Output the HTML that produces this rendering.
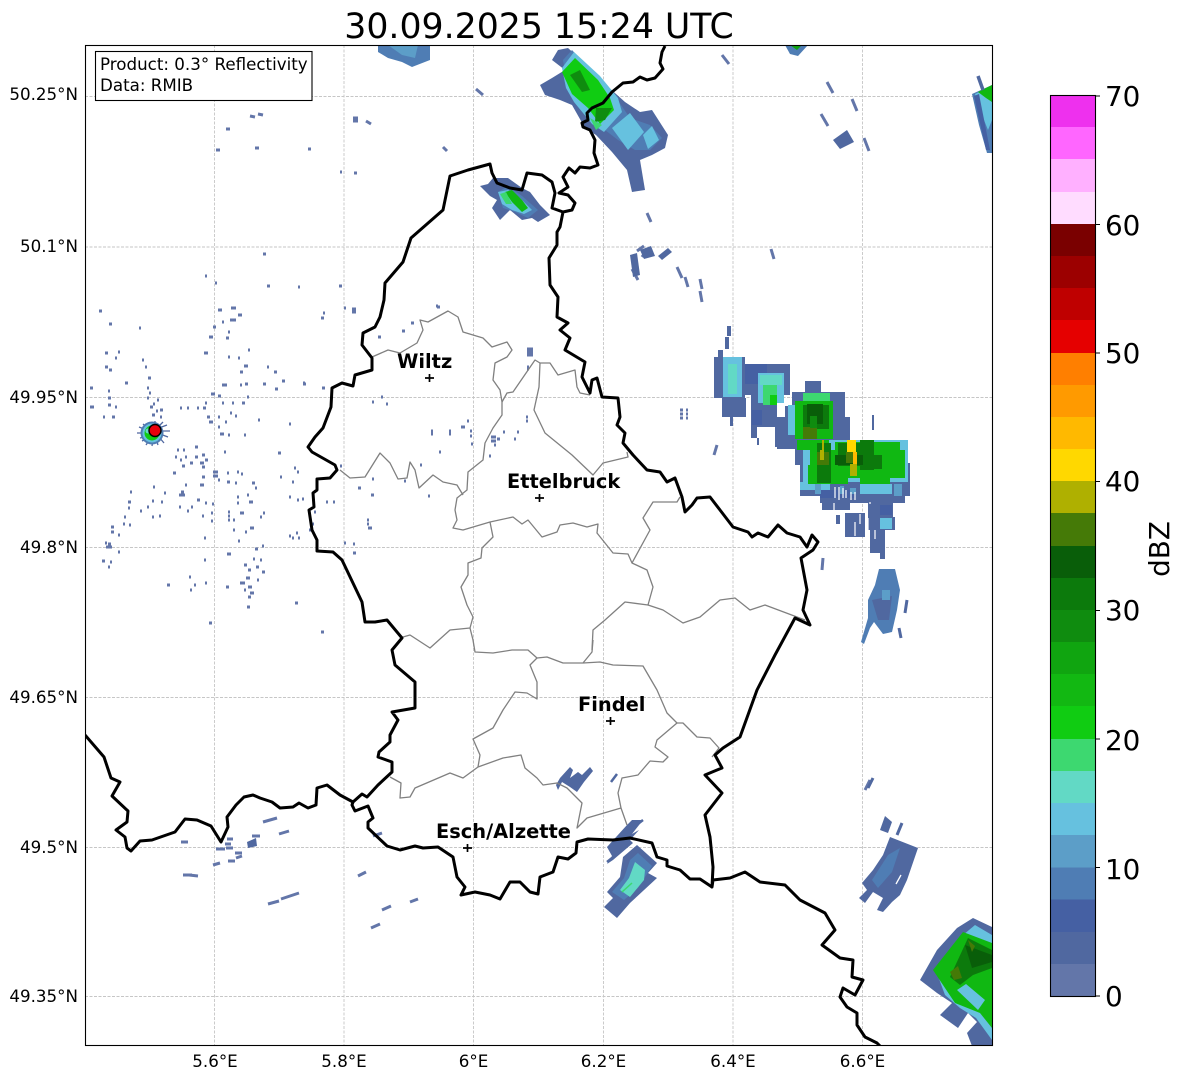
<!DOCTYPE html>
<html><head><meta charset="utf-8"><style>
html,body{margin:0;padding:0;background:#fff;width:1184px;height:1081px;overflow:hidden}
svg{display:block}
text{font-family:"DejaVu Sans","Liberation Sans",sans-serif;fill:#000}
</style></head><body>
<svg width="1184" height="1081" viewBox="0 0 1184 1081" xmlns="http://www.w3.org/2000/svg">
<defs><clipPath id="c"><rect x="85" y="45" width="908" height="1001"/></clipPath></defs>
<rect width="1184" height="1081" fill="#fff"/>
<text x="539" y="38" font-size="34.7" text-anchor="middle">30.09.2025 15:24 UTC</text>
<g stroke="#c6c6c6" stroke-width="0.9" stroke-dasharray="3 1.5" fill="none">
<path d="M214.5 45V1046M344 45V1046M473.5 45V1046M603.5 45V1046M733 45V1046M862.5 45V1046"/>
<path d="M85 96.5H993M85 247H993M85 397.5H993M85 547.5H993M85 697.5H993M85 847.5H993M85 996.5H993"/>
</g>
<g clip-path="url(#c)">
<!-- speckle -->
<path fill="none" stroke="#6376A9" stroke-width="3" d="M99 311h3M109 324h3M139 328h2M105 353h3M118 352h2M115 358h2M105 367h3M109 370h3M125 383h3M90 388h3M108 391h2M108 398h3M90 407h4M108 405h3M115 407h2M103 417h2M112 417h3M142 360h2M145 367h2M148 378h3M147 388h2M147 398h2M157 400h2M150 407h3M160 410h3M160 417h2M149 393h2M153 404h2M156 411h2M152 415h3M218 310h4M231 308h5M238 315h4M230 320h6M222 322h2M213 327h3M228 332h2M209 337h4M226 338h3M204 353h4M228 357h2M238 358h2M248 350h2M244 366h4M240 372h3M267 367h2M274 372h3M282 381h3M303 384h3M322 388h3M263 384h3M275 389h3M245 384h3M240 385h2M222 385h5M218 396h3M211 394h4M247 397h2M242 403h3M232 403h2M222 403h2M205 403h2M203 408h3M197 408h2M187 408h2M180 408h2M207 417h3M209 422h4M218 417h2M230 413h2M235 416h2M225 422h2M258 420h2M289 424h2M218 427h2M220 434h4M228 435h2M244 435h2M278 453h3M224 452h2M177 450h2M183 450h2M195 447h3M202 455h3M175 457h2M185 457h2M195 457h3M205 460h3M180 460h2M190 463h3M200 463h4M182 466h3M202 467h3M173 473h3M202 477h3M200 485h4M185 485h2M179 495h6M181 492h3M213 472h5M213 476h5M227 473h2M227 482h3M237 472h2M241 474h2M218 480h2M235 483h2M252 483h3M255 488h2M247 495h2M237 497h2M237 503h2M249 502h4M197 500h3M212 504h2M205 503h2M179 507h2M187 511h2M191 507h2M161 502h2M152 501h2M128 502h3M130 492h2M153 487h2M164 493h2M128 508h2M140 511h2M147 507h2M152 517h2M159 516h2M124 517h2M123 524h2M129 525h2M111 527h3M111 532h3M118 535h2M105 543h2M106 547h6M108 544h3M118 552h2M102 561h3M110 562h2M108 567h2M202 516h2M211 513h2M211 521h2M228 512h2M228 516h2M228 520h2M240 513h4M263 513h2M260 517h2M233 520h2M233 530h2M245 532h2M250 528h4M238 541h2M204 538h2M255 549h3M262 546h2M227 554h4M204 560h2M244 565h3M248 570h3M253 559h2M260 560h2M256 567h3M262 572h3M246 578h4M257 580h2M240 583h5M248 587h4M244 590h2M250 593h4M248 597h3M247 607h3M226 587h3M205 583h2M189 577h2M194 585h2M190 590h2M167 585h3M209 623h3M295 603h3M321 632h3M289 497h2M297 500h2M302 499h2M326 502h2M333 502h2M292 482h2M280 477h2M294 468h2M297 472h2M340 466h2M372 479h2M358 488h3M371 495h3M367 520h2M367 524h2M368 528h4M314 512h2M312 524h2M309 530h3M289 536h2M296 533h2M292 538h2M298 538h2M344 543h2M353 544h2M353 553h3M372 402h2M381 397h2M378 337h3M321 318h3M323 313h2M344 308h2M352 309h4M352 312h4M436 306h2M411 323h3M402 331h3M527 352h6M527 349h6M527 355h6M527 367h2M527 369h2M386 404h2M303 383h2M431 431h2M431 434h2M449 431h2M449 434h2M461 427h4M467 421h2M470 431h2M470 436h2M471 444h2M491 437h5M491 441h5M497 439h3M494 445h2M503 432h2M517 432h2M514 439h2M526 417h2M526 421h2M489 456h2M439 452h2M420 465h2M404 481h2M428 496h2M680 410h3M680 414h3M680 418h3M686 410h2M686 414h2M686 418h2M226 129h4M216 150h4M263 254h3M205 276h2M215 283h2M267 286h3M298 287h2M339 286h3M255 148h4M308 149h3M340 172h2M354 173h3M353 118h5M353 121h5M437 307h3"/>
<!-- dashes -->
<path fill="none" stroke="#6376A9" stroke-width="3" d="M250 116l5 1M258 114l5 1M366 121l5 3M476 89l7 6M443 147l4 4M722 55l7 9M827 82l6 11M852 99l5 12M821 114l7 12M864 138l5 13M771 249l3 10M642 257l5-7M637 251l7-5M632 255l2 9M632 269l6 11M647 213l4 9M677 267l5 11M685 277l3 10M700 279l2 10M700 291l2 11M227 839h6M225 844h6M216 849h9M226 848h7M235 853h7M236 858l6-2M228 861h7M213 865l7-2M252 836h8M263 822l14-4M279 834l10-3M373 836l9-3M183 875h9M189 875l9 1M268 904l11-3M281 899l18-6M358 876l8-4M382 910l9-4M371 928l9-4M410 902l8-3M181 842h7M717 445l-3 10M823 558l-1 12M865 790l5-10"/>
<!-- misc blobs -->
<g fill="#5068A0">
<polygon points="247,842 256,838 257,846 248,848"/>
<polygon points="833,140 847,130 854,142 840,149"/>
<polygon points="640,250 651,246 655,256 644,259"/>
<polygon points="658,256 668,248 672,252 662,260"/>
<polygon points="630,255 637,253 640,275 633,277"/>
<polygon points="880,830 885,816 892,822 888,833"/>
</g>
<!-- top cell left -->
<polygon fill="#4F7DB4" points="378,45 430,45 430,60 412,67 402,62 388,58 378,52"/>
<polygon fill="#5C9EC8" points="388,45 418,45 415,58 402,55"/>
<polygon fill="#4F7DB4" points="785,45 808,45 798,56 790,54"/>
<polygon fill="#10A510" points="790,45 802,45 797,50"/>
<!-- top centre cell -->
<polygon fill="#5068A0" points="552,60 558,50 568,48 590,68 606,85 625,102 640,112 652,110 668,135 665,148 652,155 640,160 645,190 632,192 627,170 612,152 596,135 585,128 572,105 560,100 545,95 540,85 552,78 565,70"/>
<polygon fill="#4F7DB4" points="563,60 572,50 592,72 612,92 630,118 650,125 662,138 650,150 635,150 618,140 605,130 592,122 578,105 568,90"/>
<polygon fill="#66C1DF" points="562,68 574,52 600,76 618,98 622,112 604,132 592,124 574,102 566,88"/>
<polygon fill="#66C1DF" points="612,128 630,113 644,132 628,150"/>
<polygon fill="#66C1DF" points="643,135 652,126 659,140 648,149"/>
<polygon fill="#10CC12" points="562,72 575,58 598,80 610,98 614,110 600,124 588,108 572,94"/>
<polygon fill="#0F8C0F" points="570,75 580,70 590,90 582,92"/>
<polygon fill="#0F8C0F" points="596,108 612,108 605,120 595,122"/>
<polygon fill="#3DD870" points="590,118 602,125 596,130"/>
<!-- small cell north -->
<polygon fill="#5068A0" points="480,186 488,184 493,178 508,178 522,188 530,192 540,205 550,215 538,222 532,218 522,220 510,210 500,220 492,208 497,200 490,196"/>
<polygon fill="#4F7DB4" points="498,192 508,186 522,196 538,210 528,218 515,212 503,208"/>
<polygon fill="#66C1DF" points="498,192 508,190 520,198 532,210 524,214 512,210 502,204"/>
<polygon fill="#10B812" points="505,192 512,190 522,200 528,208 522,212 512,202"/>
<polygon fill="#3DD870" points="500,194 506,192 512,204 506,204"/>
<!-- top-right cell -->
<polygon fill="#4F7DB4" points="972,94 992,85 992,153 987,153 979,125"/>
<polygon fill="#66C1DF" points="975,94 992,86 992,120 988,130 982,115"/>
<polygon fill="#4560A3" points="974,96 979,94 990,150 986,150"/>
<polygon fill="#10B812" points="978,92 992,85 992,102 986,98"/>
<path stroke="#5068A0" stroke-width="3.5" d="M978 76l5 14" fill="none"/>
<!-- east complex -->
<g fill="#5068A0">
<rect x="718" y="350" width="5" height="10"/><rect x="727" y="326" width="4" height="10"/>
<rect x="725" y="337" width="4" height="12"/>
<rect x="714" y="357" width="31" height="41"/><rect x="722" y="398" width="24" height="19"/>
<rect x="730" y="417" width="3" height="9"/>
<rect x="745" y="364" width="45" height="31"/><rect x="751" y="395" width="26" height="32"/>
<rect x="751" y="427" width="6" height="11"/><rect x="757" y="438" width="2" height="7"/>
<rect x="805" y="381" width="16" height="11"/><rect x="792" y="392" width="53" height="25"/>
<rect x="785" y="406" width="60" height="24"/><rect x="775" y="417" width="75" height="30"/>
<rect x="777" y="437" width="22" height="12"/>
<rect x="795" y="440" width="8" height="25"/><rect x="800" y="463" width="110" height="30"/>
<rect x="800" y="484" width="110" height="12"/><rect x="820" y="490" width="85" height="13"/>
<rect x="822" y="498" width="28" height="12"/><rect x="836" y="515" width="4" height="9"/>
<rect x="845" y="513" width="20" height="24"/><rect x="876" y="503" width="17" height="18"/>
<rect x="868" y="517" width="27" height="13"/><rect x="870" y="530" width="15" height="23"/>
<rect x="880" y="552" width="5" height="7"/><rect x="872" y="415" width="2" height="15"/>
<rect x="868" y="502" width="8" height="26"/>
</g>
<g fill="#4560A3"><rect x="745" y="364" width="22" height="20"/><rect x="752" y="410" width="10" height="15"/><rect x="820" y="490" width="35" height="8"/><rect x="880" y="505" width="12" height="10"/></g>
<g fill="#66C1DF">
<rect x="723" y="357" width="19" height="40"/>
<rect x="758" y="373" width="26" height="30"/>
<rect x="788" y="405" width="40" height="30"/>
<rect x="803" y="440" width="105" height="42"/>
<rect x="800" y="482" width="30" height="8"/><rect x="860" y="484" width="32" height="10"/>
<rect x="880" y="518" width="12" height="11"/>
</g>
<g fill="#5C9EC8"><rect x="840" y="486" width="4" height="8"/><rect x="850" y="488" width="6" height="6"/><rect x="894" y="484" width="8" height="12"/><rect x="815" y="484" width="6" height="10"/></g>
<g fill="#62D9C5"><rect x="728" y="364" width="9" height="30"/><rect x="760" y="375" width="22" height="10"/></g>
<rect x="763" y="385" width="14" height="20" fill="#3DD870"/>
<rect x="770" y="395" width="7" height="10" fill="#10CC12"/>
<rect x="803" y="393" width="27" height="8" fill="#3DD870"/>
<g fill="#10B812">
<rect x="795" y="401" width="38" height="38"/>
<rect x="797" y="440" width="32" height="10"/>
<rect x="810" y="450" width="95" height="28"/>
<rect x="808" y="465" width="40" height="19"/><rect x="860" y="478" width="30" height="6"/>
<rect x="835" y="442" width="65" height="10"/>
</g>
<g fill="#0C7A0C">
<rect x="803" y="405" width="26" height="24"/>
<rect x="817" y="443" width="14" height="40"/>
<rect x="838" y="443" width="22" height="23"/>
<rect x="860" y="440" width="14" height="30"/>
<rect x="872" y="455" width="10" height="14"/>
</g>
<g fill="#095E09"><rect x="807" y="404" width="16" height="20"/><rect x="835" y="455" width="28" height="10"/></g>
<rect x="803" y="427" width="14" height="12" fill="#457A07"/>
<rect x="810" y="416" width="7" height="12" fill="#0F8C0F"/>
<rect x="817" y="452" width="12" height="13" fill="#457A07"/>
<rect x="820" y="450" width="4" height="10" fill="#AFB000"/>
<rect x="822" y="440" width="2" height="12" fill="#AFB000"/>
<rect x="847" y="440" width="9" height="12" fill="#FFD800"/>
<rect x="853" y="452" width="4" height="12" fill="#FFB900"/>
<rect x="846" y="452" width="7" height="11" fill="#457A07"/>
<rect x="850" y="464" width="7" height="12" fill="#AFB000"/>
<!-- white slits -->
<path stroke="#fff" stroke-width="1.2" fill="none" d="M835 487v11M839 487v13M843 488v10M846 490v8M851 492v8M855 492v8M834 503v8M870 502v2M860 514v10M868 518v12M875 530v9M855 522v14"/>
<!-- bottom centre cell P -->
<polygon fill="#5068A0" points="556,785 560,778 570,767 573,770 570,778 578,772 582,775 590,767 593,771 584,782 577,792 570,787 562,782 558,790"/>
<path stroke="#5068A0" stroke-width="2.5" d="M611 782l6-8" fill="none"/>
<!-- south cells -->
<polygon fill="#5068A0" points="607,847 627,825 632,820 643,820 632,834 639,830 630,840 633,843 613,860 607,864 612,856"/>
<path stroke="#5068A0" stroke-width="2.5" d="M607 862l10-8M630 830l13-10" fill="none"/>
<polygon fill="#5068A0" points="623,857 637,845 657,863 648,873 657,878 630,903 617,918 604,907 613,898 607,892 620,877"/>
<polygon fill="#4F7DB4" points="630,860 638,853 652,866 638,888 624,900 612,892 624,878"/>
<polygon fill="#62D9C5" points="635,862 645,870 644,880 630,897 620,890 629,878"/>
<path stroke="#3DD870" stroke-width="1.5" d="M622 892l10-9" fill="none"/>
<!-- cell W -->
<polygon fill="#5068A0" points="890,837 918,848 907,880 900,895 892,902 883,912 877,910 883,898 873,892 865,903 859,898 867,890 862,883 873,870 883,855"/>
<polygon fill="#4F7DB4" points="888,855 900,848 892,872 878,888 872,880"/>
<path stroke="#5068A0" fill="none" stroke-width="3" d="M902 823l-5 12M873 778l-5 10"/>
<path stroke="#fff" fill="none" stroke-width="1.3" d="M901 875l-5 9"/>
<!-- cell Z -->
<polygon fill="#4F7DB4" points="879,569 895,569 900,590 897,610 892,632 883,634 874,622 870,628 864,644 861,642 868,618 868,600 875,585"/>
<polygon fill="#5068A0" points="872,600 892,596 889,620 878,620"/>
<rect x="882" y="590" width="8" height="10" fill="#5C9EC8"/>
<path stroke="#5068A0" fill="none" stroke-width="3" d="M899 628l2 10M907 600l-2 13"/>
<!-- cell X -->
<polygon fill="#5068A0" points="920,980 937,950 957,928 973,918 992,927 992,1046 972,1046 967,1033 977,1022 968,1013 958,1028 940,1015 952,1003 937,993"/>
<polygon fill="#66C1DF" points="935,968 957,940 975,925 992,935 992,1040 976,1018 960,1008 945,995"/>
<polygon fill="#10B812" points="933,970 963,932 992,943 992,1028 980,1013 955,1003"/>
<polygon fill="#0C7A0C" points="950,977 968,938 992,950 992,968 973,975 960,985"/>
<polygon fill="#095E09" points="965,945 992,955 992,962 972,968"/>
<polygon fill="#457A07" points="950,972 958,966 962,978 954,980"/>
<polygon fill="#457A07" points="968,940 975,946 972,952"/>
<polygon fill="#66C1DF" points="957,990 966,984 985,1000 978,1010"/>
<!-- radar site -->
<g fill="none" stroke="#5068A0" stroke-width="1.3">
<path d="M137 433h7M139 427l8 3M140 438l8-2M142 441l6-3M146 445l4-6M152 446l1-6M158 445l-2-6M164 443l-5-6M168 437l-8-3M170 431l-8 0M167 425l-8 3M163 422l-5 5M143 424l6 5M149 422l2 6M155 421l0 5"/>
</g>
<circle cx="152" cy="433" r="11.5" fill="#4F7DB4"/>
<circle cx="152" cy="433" r="9.5" fill="#66C1DF"/>
<circle cx="152" cy="433" r="7.5" fill="#10CC12"/>
<circle cx="148" cy="431" r="2.5" fill="#62D9C5"/>
<!-- inner borders -->
<g fill="none" stroke="#808080" stroke-width="1.3" stroke-linejoin="round">
<path d="M372 357L388 350 400 353 417 343 423 330 420 320 428 322 448 311 458 317 463 332 483 338 492 347 507 342 512 350 507 357 495 363 493 380 500 390 502 402 502 415 493 428 485 443 483 460 468 472 467 490 457 498 455 510 457 520 453 528 463 530 490 522 513 517 522 524 528 520 542 537 557 532 560 525 573 523 587 527 598 524 597 533 613 553 628 554 632 563 647 570 653 587 648 605 625 602 605 620 593 630 592 650"/>
<path d="M502 402L507 393 513 392 535 360 540 363 550 363 558 375 575 370 577 387 580 393 590 395"/>
<path d="M540 363L539 387 534 410 545 433 572 455 593 475 603 463 628 457 627 452"/>
<path d="M680 497L677 502 653 502 643 518 650 530 632 563"/>
<path d="M648 605L663 610 683 623 700 617 720 600 735 598 750 610 765 605 805 620"/>
<path d="M340 470L350 478 365 477 380 453 390 463 398 479 407 478 410 462 415 470 419 488 433 475 443 482 457 485 463 495"/>
<path d="M490 522L493 537 482 548 481 558 468 563 468 575 461 587 467 605 473 617 470 628 450 630 430 648 410 635 403 637"/>
<path d="M470 628L473 640 475 652 493 653 512 650 528 650 537 658 547 657 563 663 583 663 592 652 593 640"/>
<path d="M583 663L600 662 613 665 643 666 657 690 667 713 677 723 683 723 697 737 710 738 719 748 712 757"/>
<path d="M677 723L657 740 655 747 668 757 663 762 650 761 638 775 622 778 618 793 621 808 627 825"/>
<path d="M621 808L587 818 577 828 582 803 567 788 557 783 543 785 537 778 525 768 521 755 503 758 478 767 463 778 450 773 415 788 410 797 400 798 401 783 390 777"/>
<path d="M478 767L480 755 473 739 493 728 503 710 515 692 527 693 537 699 537 682 530 665 537 658"/>
</g>
<!-- thick borders -->
<g fill="none" stroke="#000" stroke-width="3" stroke-linejoin="round">
<path d="M665 46L662 52 660 63 663 69 655 78 647 80 640 77 633 82 623 83 612 92 603 103 592 108 587 113 588 120 582 123 583 127 590 130 595 140 594 153 598 165 590 168 580 167 575 173 569 168 563 177 568 187 559 193 568 195 575 203 572 210 563 212 560 227 557 232 557 245 549 258 550 285 558 297 557 317 568 323 560 330 570 338 565 350 585 362 582 377 590 393 592 380 597 378 602 397 618 398 620 417 617 425 625 433 623 443 633 455 647 470 660 472 667 482 675 478 682 497 685 512 692 505 697 498 710 497 720 510 733 527 748 532 752 537 758 533 768 537 778 525 787 533 800 537 807 547 812 535 818 542 813 550 801 558 807 590 803 610 810 625 795 618 775 655 757 690 740 737 723 748 715 755 722 768 717 770 705 775 722 793 705 815 710 837 713 867 712 887 713 880 730 878 745 872 760 882 785 885 800 900 825 913 835 930 822 945 840 958 853 960 852 977 863 980 855 995 843 988 840 997 847 1007 857 1013 857 1025 865 1037 877 1043 880 1046"/>
<path d="M563 212L552 208 555 193 552 182 542 175 527 173 522 190 510 188 497 183 492 173 490 164 468 170 450 176 443 210 411 238 403 262 385 283 384 300 380 317 375 327 363 333 362 345 372 358 372 370 355 375 353 386 342 383 332 388 331 407 323 428 315 437 308 447 312 452 335 465 337 470 330 478 317 479 317 490 313 493 314 507 309 510 312 530 317 540 317 551 333 552 342 560 362 602 365 622 375 622 387 620 402 638 392 650 395 665 415 682 415 708 392 712 398 720 390 735 390 742 379 752 378 757 392 762 392 772 378 785 367 797 362 794 353 802 352 805 355 811 368 806 373 818 368 822 368 828 387 846 400 850 415 846 423 848 438 847 453 857 457 877 465 887 461 895 475 892 490 895 500 899 510 882 520 882 530 892 538 894 540 877 553 872 558 857 568 859 576 853 577 842 588 839 613 840 630 838 652 843 657 857 667 860 667 866 680 870 690 879 700 879 712 887"/>
<path d="M353 802L340 795 327 785 317 788 316 805 308 808 299 803 293 807 280 808 272 802 260 798 253 795 244 797 236 805 227 817 228 827 221 842 211 826 197 820 185 819 175 832 152 840 140 841 131 851 127 848 125 837 116 830 127 822 128 811 112 796 120 782 111 778 104 757 85 735"/>
</g>
<circle cx="155" cy="430.5" r="6" fill="#e8000b" stroke="#000" stroke-width="1.4"/>
<!-- station marks -->
<path stroke="#000" stroke-width="1.7" fill="none" d="M425 378h9M429.5 374v8M535 498h9M539.5 494v8M606 721h9M610.5 717v8M463 848h9M467.5 844v8"/>
</g>
<g font-size="19.4" font-weight="700">
<text x="397" y="368" font-weight="700">Wiltz</text>
<text x="507" y="488" font-weight="700">Ettelbruck</text>
<text x="578" y="711" font-weight="700">Findel</text>
<text x="436" y="838" font-weight="700">Esch/Alzette</text>
</g>
<rect x="85.5" y="45.5" width="907" height="1000" fill="none" stroke="#000" stroke-width="1.1"/>
<rect x="95.5" y="51.5" width="216.5" height="49" fill="#fff" stroke="#000" stroke-width="1.1"/>
<text x="100" y="70" font-size="16.7">Product: 0.3° Reflectivity</text>
<text x="100" y="91" font-size="16.7">Data: RMIB</text>
<g font-size="16.7" text-anchor="end">
<text x="78" y="100">50.25°N</text><text x="78" y="252">50.1°N</text><text x="78" y="403">49.95°N</text><text x="78" y="553">49.8°N</text><text x="78" y="703">49.65°N</text><text x="78" y="853">49.5°N</text><text x="78" y="1002">49.35°N</text>
</g>
<g font-size="16.7" text-anchor="middle">
<text x="215" y="1067">5.6°E</text><text x="344" y="1067">5.8°E</text><text x="473.5" y="1067">6°E</text><text x="603.5" y="1067">6.2°E</text><text x="733" y="1067">6.4°E</text><text x="862.5" y="1067">6.6°E</text>
</g>
<!-- colorbar -->
<g shape-rendering="crispEdges">
<rect x="1051" y="964" width="44" height="32.5" fill="#6376A9"/>
<rect x="1051" y="932" width="44" height="32.2" fill="#5068A0"/>
<rect x="1051" y="899.5" width="44" height="32.5" fill="#4560A3"/>
<rect x="1051" y="867.5" width="44" height="32.2" fill="#4F7DB4"/>
<rect x="1051" y="835" width="44" height="32.5" fill="#5C9EC8"/>
<rect x="1051" y="803" width="44" height="32.2" fill="#66C1DF"/>
<rect x="1051" y="771" width="44" height="32.2" fill="#62D9C5"/>
<rect x="1051" y="739" width="44" height="32.2" fill="#3DD870"/>
<rect x="1051" y="706" width="44" height="33" fill="#10CC12"/>
<rect x="1051" y="674" width="44" height="32.2" fill="#12B812"/>
<rect x="1051" y="642" width="44" height="32.2" fill="#10A510"/>
<rect x="1051" y="610" width="44" height="32.2" fill="#0F8C0F"/>
<rect x="1051" y="578" width="44" height="32.2" fill="#0C7A0C"/>
<rect x="1051" y="546" width="44" height="32.2" fill="#095E09"/>
<rect x="1051" y="513" width="44" height="33" fill="#457A07"/>
<rect x="1051" y="481" width="44" height="32.2" fill="#AFB000"/>
<rect x="1051" y="449" width="44" height="32.2" fill="#FFD800"/>
<rect x="1051" y="417" width="44" height="32.2" fill="#FFB900"/>
<rect x="1051" y="385" width="44" height="32.2" fill="#FF9A00"/>
<rect x="1051" y="353" width="44" height="32.2" fill="#FF7F00"/>
<rect x="1051" y="320" width="44" height="33" fill="#E50000"/>
<rect x="1051" y="288" width="44" height="32.2" fill="#BF0000"/>
<rect x="1051" y="256" width="44" height="32.2" fill="#9C0000"/>
<rect x="1051" y="224" width="44" height="32.2" fill="#7A0000"/>
<rect x="1051" y="192" width="44" height="32.2" fill="#FFDCFF"/>
<rect x="1051" y="159" width="44" height="33" fill="#FFB0FF"/>
<rect x="1051" y="127" width="44" height="32.2" fill="#FF66FF"/>
<rect x="1051" y="96" width="44" height="31.2" fill="#EE30EE"/>
</g>
<rect x="1050.5" y="95.5" width="45" height="901" fill="none" stroke="#000" stroke-width="1.1"/>
<path stroke="#000" stroke-width="1.1" fill="none" d="M1095 96h5M1095 224.5h5M1095 353h5M1095 481.5h5M1095 610.5h5M1095 739h5M1095 867.5h5M1095 996h5"/>
<g font-size="27.8">
<text x="1105" y="106">70</text><text x="1105" y="235">60</text><text x="1105" y="363">50</text><text x="1105" y="491">40</text><text x="1105" y="620">30</text><text x="1105" y="750">20</text><text x="1105" y="879">10</text><text x="1105" y="1006">0</text>
</g>
<text transform="translate(1169 549) rotate(-90)" font-size="27.8" text-anchor="middle">dBZ</text>
</svg>
</body></html>
